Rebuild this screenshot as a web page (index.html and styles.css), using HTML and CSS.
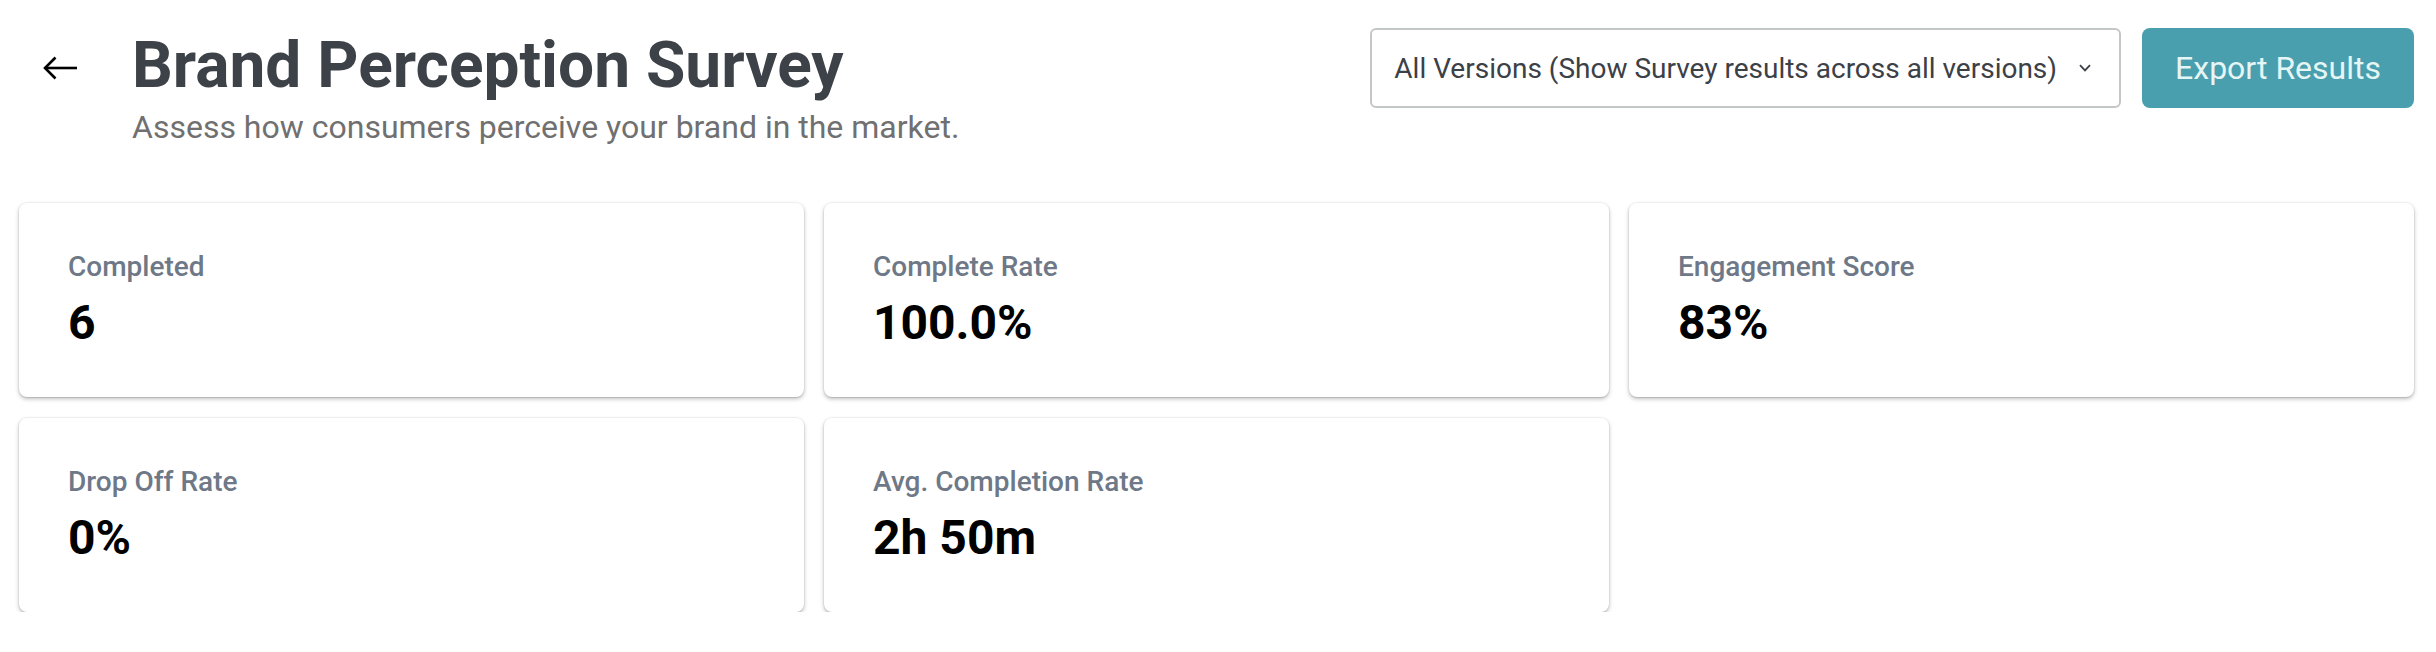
FILE: index.html
```html
<!DOCTYPE html>
<html lang="en">
<head>
<meta charset="utf-8">
<title>Brand Perception Survey</title>
<link rel="stylesheet" href="styles.css">
</head>
<body>
<div class="page">
  <header class="header">
    <div class="header-left">
      <button class="back" aria-label="Back">
        <svg width="36" height="26" viewBox="0 0 36 26" fill="none" stroke="#000" stroke-width="2.6" stroke-linecap="butt" stroke-linejoin="miter">
          <path d="M35 13 H3"/>
          <path d="M13.5 2.5 L3 13 L13.5 23.5"/>
        </svg>
      </button>
      <div class="titles">
        <h1 class="title">Brand Perception Survey</h1>
        <p class="subtitle">Assess how consumers perceive your brand in the market.</p>
      </div>
    </div>
    <div class="header-right">
      <div class="select">
        <span class="select-text">All Versions (Show Survey results across all versions)</span>
        <svg class="chevron" width="12" height="8" viewBox="0 0 12 8" fill="none" stroke="#3c4047" stroke-width="1.8">
          <path d="M1 1.2 L6 6.4 L11 1.2"/>
        </svg>
      </div>
      <button class="export">Export Results</button>
    </div>
  </header>

  <section class="stats">
    <div class="card">
      <div class="label">Completed</div>
      <div class="value">6</div>
    </div>
    <div class="card">
      <div class="label">Complete Rate</div>
      <div class="value">100.0%</div>
    </div>
    <div class="card">
      <div class="label">Engagement Score</div>
      <div class="value">83%</div>
    </div>
    <div class="card">
      <div class="label">Drop Off Rate</div>
      <div class="value">0%</div>
    </div>
    <div class="card">
      <div class="label">Avg. Completion Rate</div>
      <div class="value">2h 50m</div>
    </div>
  </section>
</div>
</body>
</html>
```

FILE: styles.css
```css
* { box-sizing: border-box; }

html, body {
  margin: 0;
  padding: 0;
  background: #ffffff;
  font-family: Roboto, "Liberation Sans", Arial, sans-serif;
}

.page {
  width: 2436px;
}

.header {
  display: flex;
  justify-content: space-between;
  align-items: flex-start;
  padding: 28px 22px 0 42px;
}

.header-left {
  display: flex;
  align-items: flex-start;
  gap: 54px;
}

.back {
  border: 0;
  background: none;
  padding: 0;
  margin-top: 27px;
  width: 36px;
  height: 26px;
  display: flex;
  cursor: pointer;
}

.titles {
  margin-top: 2px;
}

.title {
  margin: 0;
  font-size: 64px;
  line-height: 72px;
  font-weight: 700;
  color: #3d4148;
}

.subtitle {
  margin: 6px 0 0;
  font-size: 32px;
  line-height: 38px;
  font-weight: 400;
  color: #707070;
}

.header-right {
  display: flex;
  align-items: center;
  gap: 21px;
}

.select {
  display: flex;
  align-items: center;
  height: 80px;
  padding: 0 28px 0 22px;
  border: 2px solid #c4c7c7;
  border-radius: 6px;
  background: #fff;
  gap: 22px;
}

.select-text {
  font-size: 28px;
  color: #3c4047;
  white-space: nowrap;
}

.chevron {
  display: block;
}

.export {
  height: 80px;
  padding: 0 33px;
  border: 0;
  border-radius: 8px;
  background: #499fae;
  color: #e6f5f5;
  font-family: inherit;
  font-size: 32px;
  font-weight: 400;
  cursor: pointer;
}

.stats {
  display: grid;
  grid-template-columns: repeat(3, 1fr);
  gap: 21px 20px;
  padding: 0 22px 0 19px;
  margin-top: 57px;
}

.card {
  background: #fff;
  border-radius: 8px;
  padding: 44px 49px 46px;
  box-shadow: 0 0 0 1px rgba(0,0,0,0.035), 0 2px 4px rgba(0,0,0,0.25), 0 1px 1px rgba(0,0,0,0.08);
}

.label {
  font-size: 28px;
  line-height: 40px;
  font-weight: 500;
  color: #6e7887;
}

.value {
  margin-top: 8px;
  font-size: 48px;
  line-height: 56px;
  font-weight: 700;
  color: #000;
}
```
